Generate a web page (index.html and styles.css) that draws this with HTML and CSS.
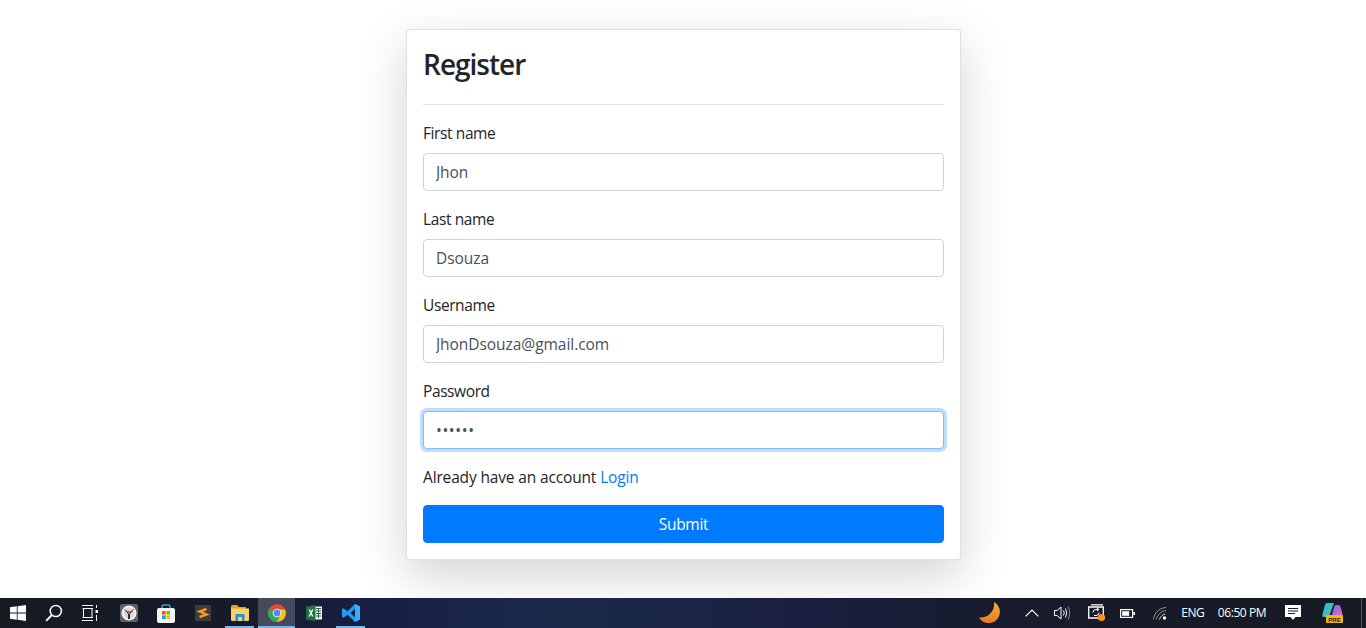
FILE: index.html
```html
<!DOCTYPE html>
<html>
  <head>
    <title>Register</title>
    <meta charset="UTF-8">
    <meta name="viewport" content="width=device-width, initial-scale=1.0">
    <link rel="stylesheet" href="styles.css">
  </head>
  <body>

<!-- REGISTER FORM -->
<main class="page">
<form class="card">
<h3 class="title">Register</h3>
<hr class="line">
<div class="field">
<label class="fieldLabel" for="first">First name</label>
<input class="fieldInput" id="first" type="text" value="Jhon">
</div>
<div class="field">
<label class="fieldLabel" for="last">Last name</label>
<input class="fieldInput" id="last" type="text" value="Dsouza">
</div>
<div class="field">
<label class="fieldLabel" for="user">Username</label>
<input class="fieldInput" id="user" type="text" value="JhonDsouza@gmail.com">
</div>
<div class="field">
<label class="fieldLabel" for="pass">Password</label>
<input class="fieldInput focused" id="pass" type="password" value="123456">
</div>
<p class="hint">Already have an account <a class="link" href="#">Login</a></p>
<button class="submit" type="button">Submit</button>
</form>
</main>

<!-- TASKBAR -->
<footer class="taskbar">
<div class="apps">
<span class="sys">
<svg width="16" height="16" viewBox="0 0 16 16"><path fill="#fff" d="M0 2.3 6.8 1.3V7.6H0ZM7.6 1.2 16 0V7.6H7.6ZM0 8.4H6.8V14.7L0 13.7ZM7.6 8.4H16V16L7.6 14.8Z"/></svg>
</span>
<span class="sys">
<svg width="18" height="18" viewBox="0 0 18 18" fill="none" stroke="#fff"><circle cx="10.8" cy="7" r="5.6" stroke-width="1.5"/><path d="M6.8 11 1.2 16.8" stroke-width="1.8"/></svg>
</span>
<span class="sys">
<svg width="16" height="16" viewBox="0 0 16 16" fill="none" stroke="#fff"><path d="M0 .5H11M0 15.500H11M1.500 3.500V12.500M10 3.500V12.500M.5 3.500H11M.5 12.500H11M14.500 0V3M14.500 10V16"/><rect x="13.500" y="5" width="2.500" height="3" fill="#fff" stroke="none"/></svg>
</span>
<span class="app first">
<svg width="18" height="18" viewBox="0 0 18 18"><rect width="18" height="18" rx="2" fill="#5f6266"/><circle cx="9" cy="9" r="7.600" fill="#f1f1f1"/><circle cx="9" cy="9" r="5.500" fill="#d9d9d9"/><path d="M3.500 4.500 9 8.500 14.500 4.500 10 10V15H8V10Z" fill="#2d2f33"/><circle cx="9" cy="8.500" r="1.500" fill="#d4502f"/></svg>
</span>
<span class="app">
<svg width="18" height="19" viewBox="0 0 18 19"><path d="M5 5V2.500Q5 1 6.500 1H11.500Q13 1 13 2.500V5" fill="none" stroke="#2ea4e8" stroke-width="1.500"/><rect y="4" width="18" height="15" rx="2" fill="#f4f4f4"/><rect x="5" y="7" width="3.600" height="3.600" fill="#f25022"/><rect x="9.400" y="7" width="3.600" height="3.600" fill="#7fba00"/><rect x="5" y="11.400" width="3.600" height="3.600" fill="#00a4ef"/><rect x="9.400" y="11.400" width="3.600" height="3.600" fill="#ffb900"/></svg>
</span>
<span class="app">
<svg width="16" height="16" viewBox="0 0 16 16"><rect width="16" height="16" fill="#3d3d3d"/><path d="M11.500 4 4.500 6.500 11.500 9.500 4.500 12" fill="none" stroke="#f89b1c" stroke-width="2.400"/></svg>
</span>
<span class="app open">
<svg width="18" height="16" viewBox="0 0 18 16"><path d="M0 1.500Q0 0 1.500 0H6L8 2H15V4H0Z" fill="#e0a526"/><path d="M0 3.500H18V14.500Q18 16 16.500 16H1.500Q0 16 0 14.500Z" fill="#fad165"/><path d="M4.500 9H13.500V16H11V12H7V16H4.500Z" fill="#2a8fd8"/></svg>
</span>
<span class="app open active">
<svg width="18" height="18" viewBox="0 0 18 18"><circle cx="9" cy="9" r="9" fill="#e8453c"/><path d="M9 9 1.200 4.500A9 9 0 0 0 9 18L13.500 9.800Z" fill="#34a853"/><path d="M9 5.500H17.100A9 9 0 0 1 9 18L13 9.500Z" fill="#fbc116"/><circle cx="9" cy="9" r="4.300" fill="#fff"/><circle cx="9" cy="9" r="3.400" fill="#4a8cf0"/></svg>
</span>
<span class="app">
<svg width="16" height="16" viewBox="0 0 16 16"><rect x="6" y="1.500" width="10" height="13" fill="#f4f4f4"/><path d="M10 3.500H15M10 6H15M10 8.500H15M10 11H15M12.500 3V13" stroke="#1d7145" fill="none"/><path d="M0 1.500 9.500 0V16L0 14.500Z" fill="#1d7145"/><path d="M2.500 4.500H4.100L5 6.700 6 4.500H7.500L5.800 8 7.500 11.500H6L5 9.200 4 11.500H2.500L4.200 8Z" fill="#fff"/></svg>
</span>
<span class="app open">
<svg width="18" height="18" viewBox="0 0 18 18"><path d="M13 0 18 2.400V15.600L13 18 5.500 10.800 1.500 13.800 0 13V5L1.500 4.200 5.500 7.200ZM13 4.800 8.500 9 13 13.200Z" fill="#1f9cf0"/><path d="M13 0 18 2.400V15.600L13 18Z" fill="#37aef5"/></svg>
</span>
</div>
<div class="tray">
<span class="trayItem moon">
<svg width="23" height="22" viewBox="0 0 23 22"><defs><linearGradient id="moonFill" x1="0" y1="0" x2="0" y2="1"><stop offset="0" stop-color="#fbb03b"/><stop offset="1" stop-color="#e87a1d"/></linearGradient></defs><path d="M15 0A11.200 11.200 0 1 1 0 15.500 13.500 13.500 0 0 0 15 0Z" fill="url(#moonFill)"/></svg>
</span>
<span class="trayItem chevron">
<svg width="14" height="8" viewBox="0 0 14 8" fill="none" stroke="#fff" stroke-width="1.200"><path d="M.6 7.400 7 1 13.400 7.400"/></svg>
</span>
<span class="trayItem">
<svg width="17" height="14" viewBox="0 0 17 14" fill="none" stroke="#fff"><path d="M.5 4.500H3L7 1V13L3 9.500H.5Z"/><path d="M9.500 4.500Q11 7 9.500 9.500M11.500 2.500Q14 7 11.500 11.500"/><path d="M14 .5Q17.500 7 14 13.500" stroke="#8a8d94"/></svg>
</span>
<span class="trayItem screen">
<svg width="18" height="18" viewBox="0 0 18 18" fill="none"><path d="M.7 3H15.300V14H.7Z M3 .8H15" stroke="#fff" stroke-width="1.300"/><path d="M5 8.500Q5 5.500 8 5.500H10M9 4 11 5.500 9 7M11 8.500Q11 11.500 8 11.500H6" stroke="#fff"/><circle cx="13.500" cy="13.500" r="3.600" fill="#f7931e"/></svg>
</span>
<span class="trayItem">
<svg width="15" height="9" viewBox="0 0 15 9"><rect x=".6" y=".6" width="12" height="7.800" fill="none" stroke="#fff" stroke-width="1.200"/><rect x="2.200" y="2.200" width="7" height="4.600" fill="#fff"/><rect x="13.400" y="3" width="1.600" height="3" fill="#fff"/></svg>
</span>
<span class="trayItem">
<svg width="14" height="13" viewBox="0 0 14 13" fill="none" stroke="#8f9298"><path d="M.5 12.500C1 6 6 1 13 .5"/><path d="M3.500 12.500C4 8 8 4 13 3.500"/><path d="M6.500 12.500C7 10 9.500 7.500 12 7" stroke="#d5d6d9"/><circle cx="11.500" cy="11" r="1.700" fill="#fff" stroke="none"/></svg>
</span>
<span class="trayItem trayText">ENG</span>
<span class="trayItem trayText clock">06:50 PM</span>
<span class="trayItem notify">
<svg width="16" height="16" viewBox="0 0 16 16"><path d="M0 0H16V12H10.500L8 15 5.500 12H0Z" fill="#fff"/><path d="M3 3.500H13M3 6H13M3 8.500H10" stroke="#1a1d26"/></svg>
</span>
<span class="trayItem copilot">
<svg width="21" height="20" viewBox="0 0 21 20"><defs><linearGradient id="copA" x1="0" y1="0" x2="1" y2="1"><stop offset="0" stop-color="#2fb6f0"/><stop offset="1" stop-color="#48c98a"/></linearGradient><linearGradient id="copB" x1="0" y1="0" x2="1" y2="1"><stop offset="0" stop-color="#7b6cf0"/><stop offset="1" stop-color="#e86ac0"/></linearGradient></defs><path d="M5 0H12L8 11Q7 14 4 14H1.500Q0 14 .3 12L3 2Q3.500 0 5 0Z" fill="url(#copA)"/><path d="M14 2H16Q18 2 18.500 4L20.500 11Q21 13 19 13H11Q9.500 13 10 11.500L12.500 3Q13 2 14 2Z" fill="url(#copB)"/><rect x="4" y="12" width="17" height="8" rx="1" fill="#f5b50e"/><text class="copilotBadge" x="12.500" y="18.600" text-anchor="middle">PRE</text></svg>
</span>
<span class="desktop"></span>
</div>
</footer>

  </body>
</html>
```
FILE: styles.css
```css
*{
box-sizing: border-box;
}

body{
margin: 0;
height: 100vh;
display: flex;
flex-direction: column;
overflow: hidden;
background-color: white;
color: #212529;
font-family: "Open Sans", "Noto Sans", sans-serif;
font-size: 16px;
line-height: 24px;
}

.page{
flex: 1;
min-height: 0;
display: flex;
justify-content: center;
padding-top: 29px;
padding-left: 1px;
}

.card{
width: 555px;
height: 531px;
padding: 16px;
background-color: white;
border: 1px solid rgba(0, 0, 0, .125);
border-radius: 4px;
box-shadow: 0 16px 48px rgba(0, 0, 0, .175);
}

.title{
margin: 0;
padding: 2px 0 6px 0;
font-size: 28px;
font-weight: 600;
line-height: 33.6px;
letter-spacing: -1px;
}

.line{
margin: 16px 0;
border: 0;
border-top: 1px solid rgba(0, 0, 0, .1);
}

.field{
margin-bottom: 16px;
}

.fieldLabel{
display: block;
margin-bottom: 8px;
font-size: 15.500px;
letter-spacing: -.4px;
}

.fieldInput{
display: block;
width: 100%;
height: 38px;
padding: 6px 12px;
border: 1px solid #ced4da;
border-radius: 4px;
background-color: white;
color: #495057;
font-family: inherit;
font-size: 15.500px;
letter-spacing: -.05px;
outline: 0;
}

.focused{
border-color: #80bdff;
box-shadow: 0 0 0 3px rgba(0, 123, 255, .25);
letter-spacing: .6px;
}

.hint{
margin: 0 0 16px 0;
font-size: 15.500px;
letter-spacing: -.15px;
}

.link{
color: #007bff;
text-decoration: none;
}

.submit{
display: block;
width: 100%;
height: 38px;
border: 1px solid #007bff;
border-radius: 4px;
background-color: #007bff;
color: white;
font-family: inherit;
font-size: 15.500px;
letter-spacing: -.3px;
}

.taskbar{
flex: none;
height: 30px;
display: flex;
justify-content: space-between;
background: linear-gradient(90deg, #161a22 0, #171b2a 240px, #182048 400px, #1b2a4a 540px, #1a2040 800px, #171b2c 1000px, #161a22 1366px);
}

.apps, .tray{
display: flex;
height: 30px;
}

.sys{
width: 36px;
display: flex;
align-items: center;
justify-content: center;
}

.app{
position: relative;
width: 37px;
display: flex;
align-items: center;
justify-content: center;
}

.app.first{
margin-left: 2px;
}

.open::after{
content: "";
position: absolute;
left: 4px;
right: 4px;
bottom: 0;
height: 2px;
background-color: #76b9ed;
}

.active{
background-color: #454a5c;
}

.active::after{
left: 0;
right: 0;
}

.trayItem{
width: 32.500px;
display: flex;
align-items: center;
justify-content: center;
}

.moon{
width: 40px;
margin-right: 4px;
}

.chevron{
padding-left: 3px;
}

.screen{
padding-left: 3px;
}

.trayText{
color: white;
font-size: 12px;
letter-spacing: -.4px;
}

.clock{
width: 66px;
}

.notify{
width: 36px;
}

.copilot{
width: 36px;
margin-left: 3px;
}

.copilotBadge{
font-family: "Liberation Sans", sans-serif;
font-size: 6px;
font-weight: bold;
fill: #1a1d26;
}

.desktop{
width: 12px;
border-right: 1px solid #555;
margin-right: 4px;
}
```
